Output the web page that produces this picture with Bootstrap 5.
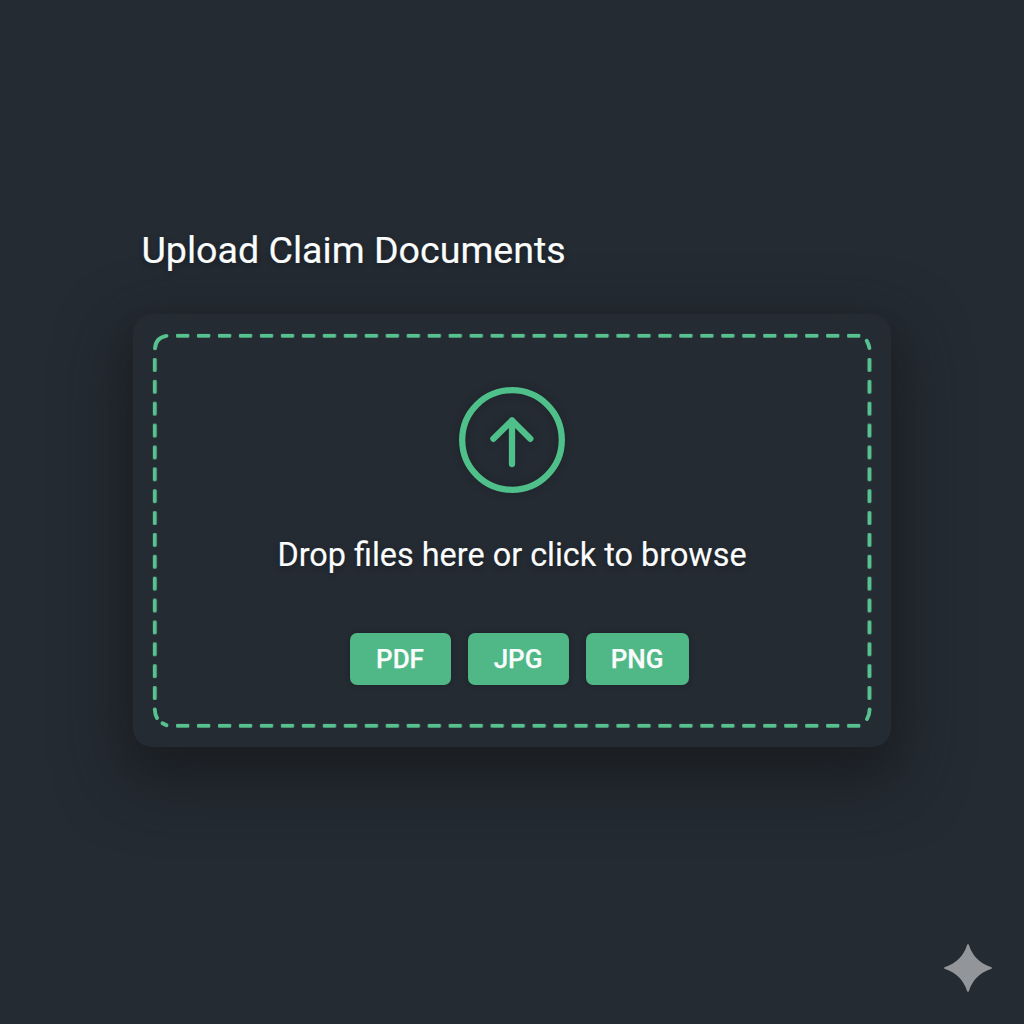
<!DOCTYPE html>
<html lang="en">
<head>
<meta charset="utf-8">
<meta name="viewport" content="width=device-width, initial-scale=1">
<title>Upload Claim Documents</title>
<link href="https://cdn.jsdelivr.net/npm/bootstrap@5.3.0/dist/css/bootstrap.min.css" rel="stylesheet">
<style>
  body { background: #242b33; color: #fbfcfc; font-family: Roboto, sans-serif; height: 1024px; overflow: hidden; }
  .upload-panel { width: 758px; padding-top: 227px; margin-left: 133px; }
  .upload-title { font-size: 37.6px; line-height: 46px; margin: 0 0 41px 8.5px; font-weight: 400; text-shadow: 0 2px 6px rgba(0,0,0,.3); -webkit-text-stroke: .2px #fbfcfc; white-space: nowrap; }
  .drop-zone { height: 433px; border-radius: 19px; background: #252b33; padding-top: 73px;
    box-shadow: 0 26px 64px 10px rgba(25,27,28,.72), 0 16px 26px rgba(25,27,28,.2); }
  .zone-outline { pointer-events: none; }
  .upload-icon { filter: drop-shadow(0 0 4px rgba(20,23,26,.45)); }
  .drop-hint { font-size: 32.4px; line-height: 40px; margin: 42px 0 0; text-shadow: 0 2px 6px rgba(0,0,0,.3); -webkit-text-stroke: .15px #fbfcfc; white-space: nowrap; }
  .file-types { gap: 17px; margin-top: 58px; padding-left: 14px; }
  .file-type { width: 101px; height: 52px; border-radius: 7px; background: #4fb886; color: #fbfcfc; font-size: 26px; font-weight: 500; line-height: 52px; padding: 0; -webkit-text-stroke: .25px #fbfcfc; box-shadow: 0 0 5px rgba(20,23,26,.4); }
  .file-type.wide { width: 103px; }
  .spark { right: 32px; bottom: 32px; }
</style>
</head>
<body class="position-relative">
<main class="upload-panel">
  <h1 class="upload-title">Upload Claim Documents</h1>
  <section class="drop-zone position-relative d-flex flex-column align-items-center">
    <svg class="zone-outline position-absolute top-0 start-0" width="758" height="433" viewBox="133 314 758 433" aria-hidden="true">
      <defs>
        <pattern id="dash-h" x="176" y="0" width="20.97" height="390" patternUnits="userSpaceOnUse" patternTransform="translate(0 333.7)">
          <rect width="13.3" height="4.1" rx="1.3" fill="#57c28f"/>
        </pattern>
        <pattern id="dash-v" x="0" y="358" width="714.7" height="21.87" patternUnits="userSpaceOnUse" patternTransform="translate(152.6 0)">
          <rect width="4.2" height="13.8" rx="1.5" fill="#57c28f"/>
        </pattern>
      </defs>
      <rect x="176" y="333.7" width="685" height="5" fill="url(#dash-h)"/>
      <rect x="176" y="723.7" width="685" height="5" fill="url(#dash-h)"/>
      <rect x="152.6" y="358" width="5" height="343" fill="url(#dash-v)"/>
      <rect x="867.3" y="358" width="5" height="343" fill="url(#dash-v)"/>
      <g fill="none" stroke="#57c28f" stroke-width="3.9" stroke-linecap="round">
        <path d="M155 348.3C155.500 341 160 337 166.500 335.900"/>
        <path d="M866.700 340.700Q868.700 344 869.400 348"/>
        <path d="M154.800 709.500Q155 714.500 157 718"/>
        <path d="M162.500 723.300L166.500 725.300"/>
        <path d="M869.600 709.500Q869.500 715 867 719"/>
      </g>
    </svg>
    <svg class="upload-icon" width="106" height="106" viewBox="459 387 106 106" fill="none" stroke="#4fc08a" stroke-width="6.3" stroke-linecap="round" stroke-linejoin="round" role="img" aria-label="Upload">
      <circle cx="512" cy="440" r="49.800"/>
      <path d="M512 464V420.500M493.400 438.800L512 420.500L530.300 438.800"/>
    </svg>
    <p class="drop-hint">Drop files here or click to browse</p>
    <div class="file-types d-flex">
      <span class="badge file-type">PDF</span>
      <span class="badge file-type">JPG</span>
      <span class="badge file-type wide">PNG</span>
    </div>
  </section>
</main>
<svg class="spark position-absolute" width="48" height="48" viewBox="0 0 48 48" aria-hidden="true">
  <path fill="#92969a" d="M24 0Q24.800 0 25.200 1.800C28.500 12 36 19.500 46.200 22.800Q48 23.200 48 24Q48 24.800 46.200 25.200C36 28.500 28.500 36 25.200 46.200Q24.800 48 24 48Q23.200 48 22.800 46.200C19.500 36 12 28.500 1.800 25.200Q0 24.800 0 24Q0 23.200 1.800 22.800C12 19.500 19.500 12 22.800 1.800Q23.200 0 24 0Z"/>
</svg>
<script src="https://cdn.jsdelivr.net/npm/bootstrap@5.3.0/dist/js/bootstrap.bundle.min.js"></script>
</body>
</html>
